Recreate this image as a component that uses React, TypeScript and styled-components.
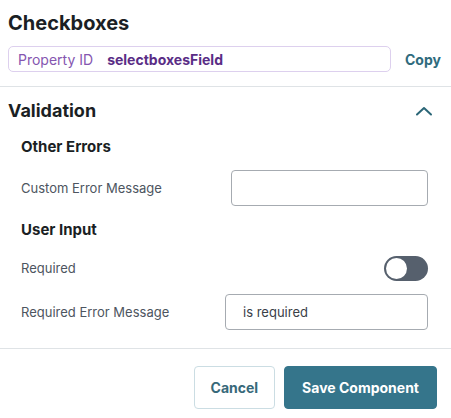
import React from 'react';
import styled, { createGlobalStyle } from 'styled-components';

const GlobalStyle = createGlobalStyle`
  * { box-sizing: border-box; }
  body {
    margin: 0;
    background: #ffffff;
    font-family: Inter, "Noto Sans", sans-serif;
    color: #1f2328;
  }
`;

const Panel = styled.div`
  width: 451px;
  height: 418px;
  display: flex;
  flex-direction: column;
  overflow: hidden;
`;

const Header = styled.div`
  padding: 9px 10px 0 8px;
`;

const Title = styled.h1`
  margin: 0;
  font-size: 20px;
  font-weight: 700;
  line-height: 28px;
  color: #1b1f24;
`;

const IdRow = styled.div`
  display: flex;
  align-items: center;
  margin-top: 9px;
  gap: 14px;
`;

const IdBox = styled.div`
  width: 383px;
  height: 26px;
  border: 1px solid #ddd0ee;
  border-radius: 5px;
  display: flex;
  align-items: center;
  padding-left: 9px;
  font-size: 14px;
`;

const IdLabel = styled.span`
  color: #8556b0;
  margin-right: 14px;
`;

const IdValue = styled.span`
  color: #5a2d86;
  font-weight: 700;
`;

const CopyButton = styled.button`
  border: none;
  background: none;
  padding: 0;
  font-family: inherit;
  font-size: 14px;
  font-weight: 700;
  color: #2f6b7d;
`;

const Divider = styled.hr`
  border: none;
  border-top: 1px solid #dfe3e6;
  margin: ${(p: { $top: number }) => p.$top}px 0 0;
`;

const SectionHead = styled.div`
  display: flex;
  justify-content: space-between;
  align-items: center;
  padding: 12px 18px 0 8px;
`;

const SectionTitle = styled.h2`
  margin: 0;
  font-size: 18px;
  font-weight: 700;
  line-height: 24px;
  color: #1b1f24;
`;

const Body = styled.div`
  padding: 0 23px 0 21px;
`;

const GroupTitle = styled.h3`
  margin: ${(p: { $top: number }) => p.$top}px 0 0;
  font-size: 15px;
  font-weight: 700;
  line-height: 20px;
  color: #1b1f24;
`;

const FieldRow = styled.div<{ $top: number; $h: number }>`
  display: flex;
  justify-content: space-between;
  align-items: center;
  margin-top: ${(p) => p.$top}px;
  height: ${(p) => p.$h}px;
`;

const FieldLabel = styled.span`
  font-size: 13px;
  color: #4d5560;
`;

const TextInput = styled.input<{ $w: number }>`
  width: ${(p) => p.$w}px;
  height: 36px;
  border: 1px solid #a6abb1;
  border-radius: 4px;
  padding: 0 17px;
  font-family: inherit;
  font-size: 13px;
  color: #3a4048;
  outline: none;
`;

const Toggle = styled.div`
  width: 44px;
  height: 25px;
  border-radius: 13px;
  background: #56606d;
  padding: 2px;
  display: flex;
  align-items: center;
`;

const Knob = styled.div`
  width: 21px;
  height: 21px;
  border-radius: 50%;
  background: #ffffff;
`;

const Footer = styled.div`
  display: flex;
  justify-content: flex-end;
  gap: 9px;
  padding: 17px 14px 0 0;
`;

const Button = styled.button<{ $primary?: boolean }>`
  height: 43px;
  padding: 0 ${(p) => (p.$primary ? 17 : 16)}px;
  border-radius: 4px;
  font-family: inherit;
  font-size: 14px;
  font-weight: 700;
  border: 1px solid ${(p) => (p.$primary ? '#35758b' : '#cbdde3')};
  background: ${(p) => (p.$primary ? '#35758b' : '#ffffff')};
  color: ${(p) => (p.$primary ? '#ffffff' : '#38697a')};
`;

const ChevronUp = () => (
  <svg width="18" height="10" viewBox="0 0 18 10" fill="none">
    <path d="M2 8.5 L9 2 L16 8.5" stroke="#2b6677" strokeWidth="2" strokeLinecap="round" strokeLinejoin="round" />
  </svg>
);

export default function App() {
  return (
    <>
      <GlobalStyle />
      <Panel>
        <Header>
          <Title>Checkboxes</Title>
          <IdRow>
            <IdBox>
              <IdLabel>Property ID</IdLabel>
              <IdValue>selectboxesField</IdValue>
            </IdBox>
            <CopyButton>Copy</CopyButton>
          </IdRow>
        </Header>
        <Divider $top={14} />
        <SectionHead>
          <SectionTitle>Validation</SectionTitle>
          <ChevronUp />
        </SectionHead>
        <Body>
          <GroupTitle $top={14}>Other Errors</GroupTitle>
          <FieldRow $top={13} $h={36}>
            <FieldLabel>Custom Error Message</FieldLabel>
            <TextInput $w={197} defaultValue="" />
          </FieldRow>
          <GroupTitle $top={14}>User Input</GroupTitle>
          <FieldRow $top={15} $h={26}>
            <FieldLabel>Required</FieldLabel>
            <Toggle>
              <Knob />
            </Toggle>
          </FieldRow>
          <FieldRow $top={13} $h={36}>
            <FieldLabel>Required Error Message</FieldLabel>
            <TextInput $w={203} defaultValue="is required" />
          </FieldRow>
        </Body>
        <Divider $top={18} />
        <Footer>
          <Button>Cancel</Button>
          <Button $primary>Save Component</Button>
        </Footer>
      </Panel>
    </>
  );
}
